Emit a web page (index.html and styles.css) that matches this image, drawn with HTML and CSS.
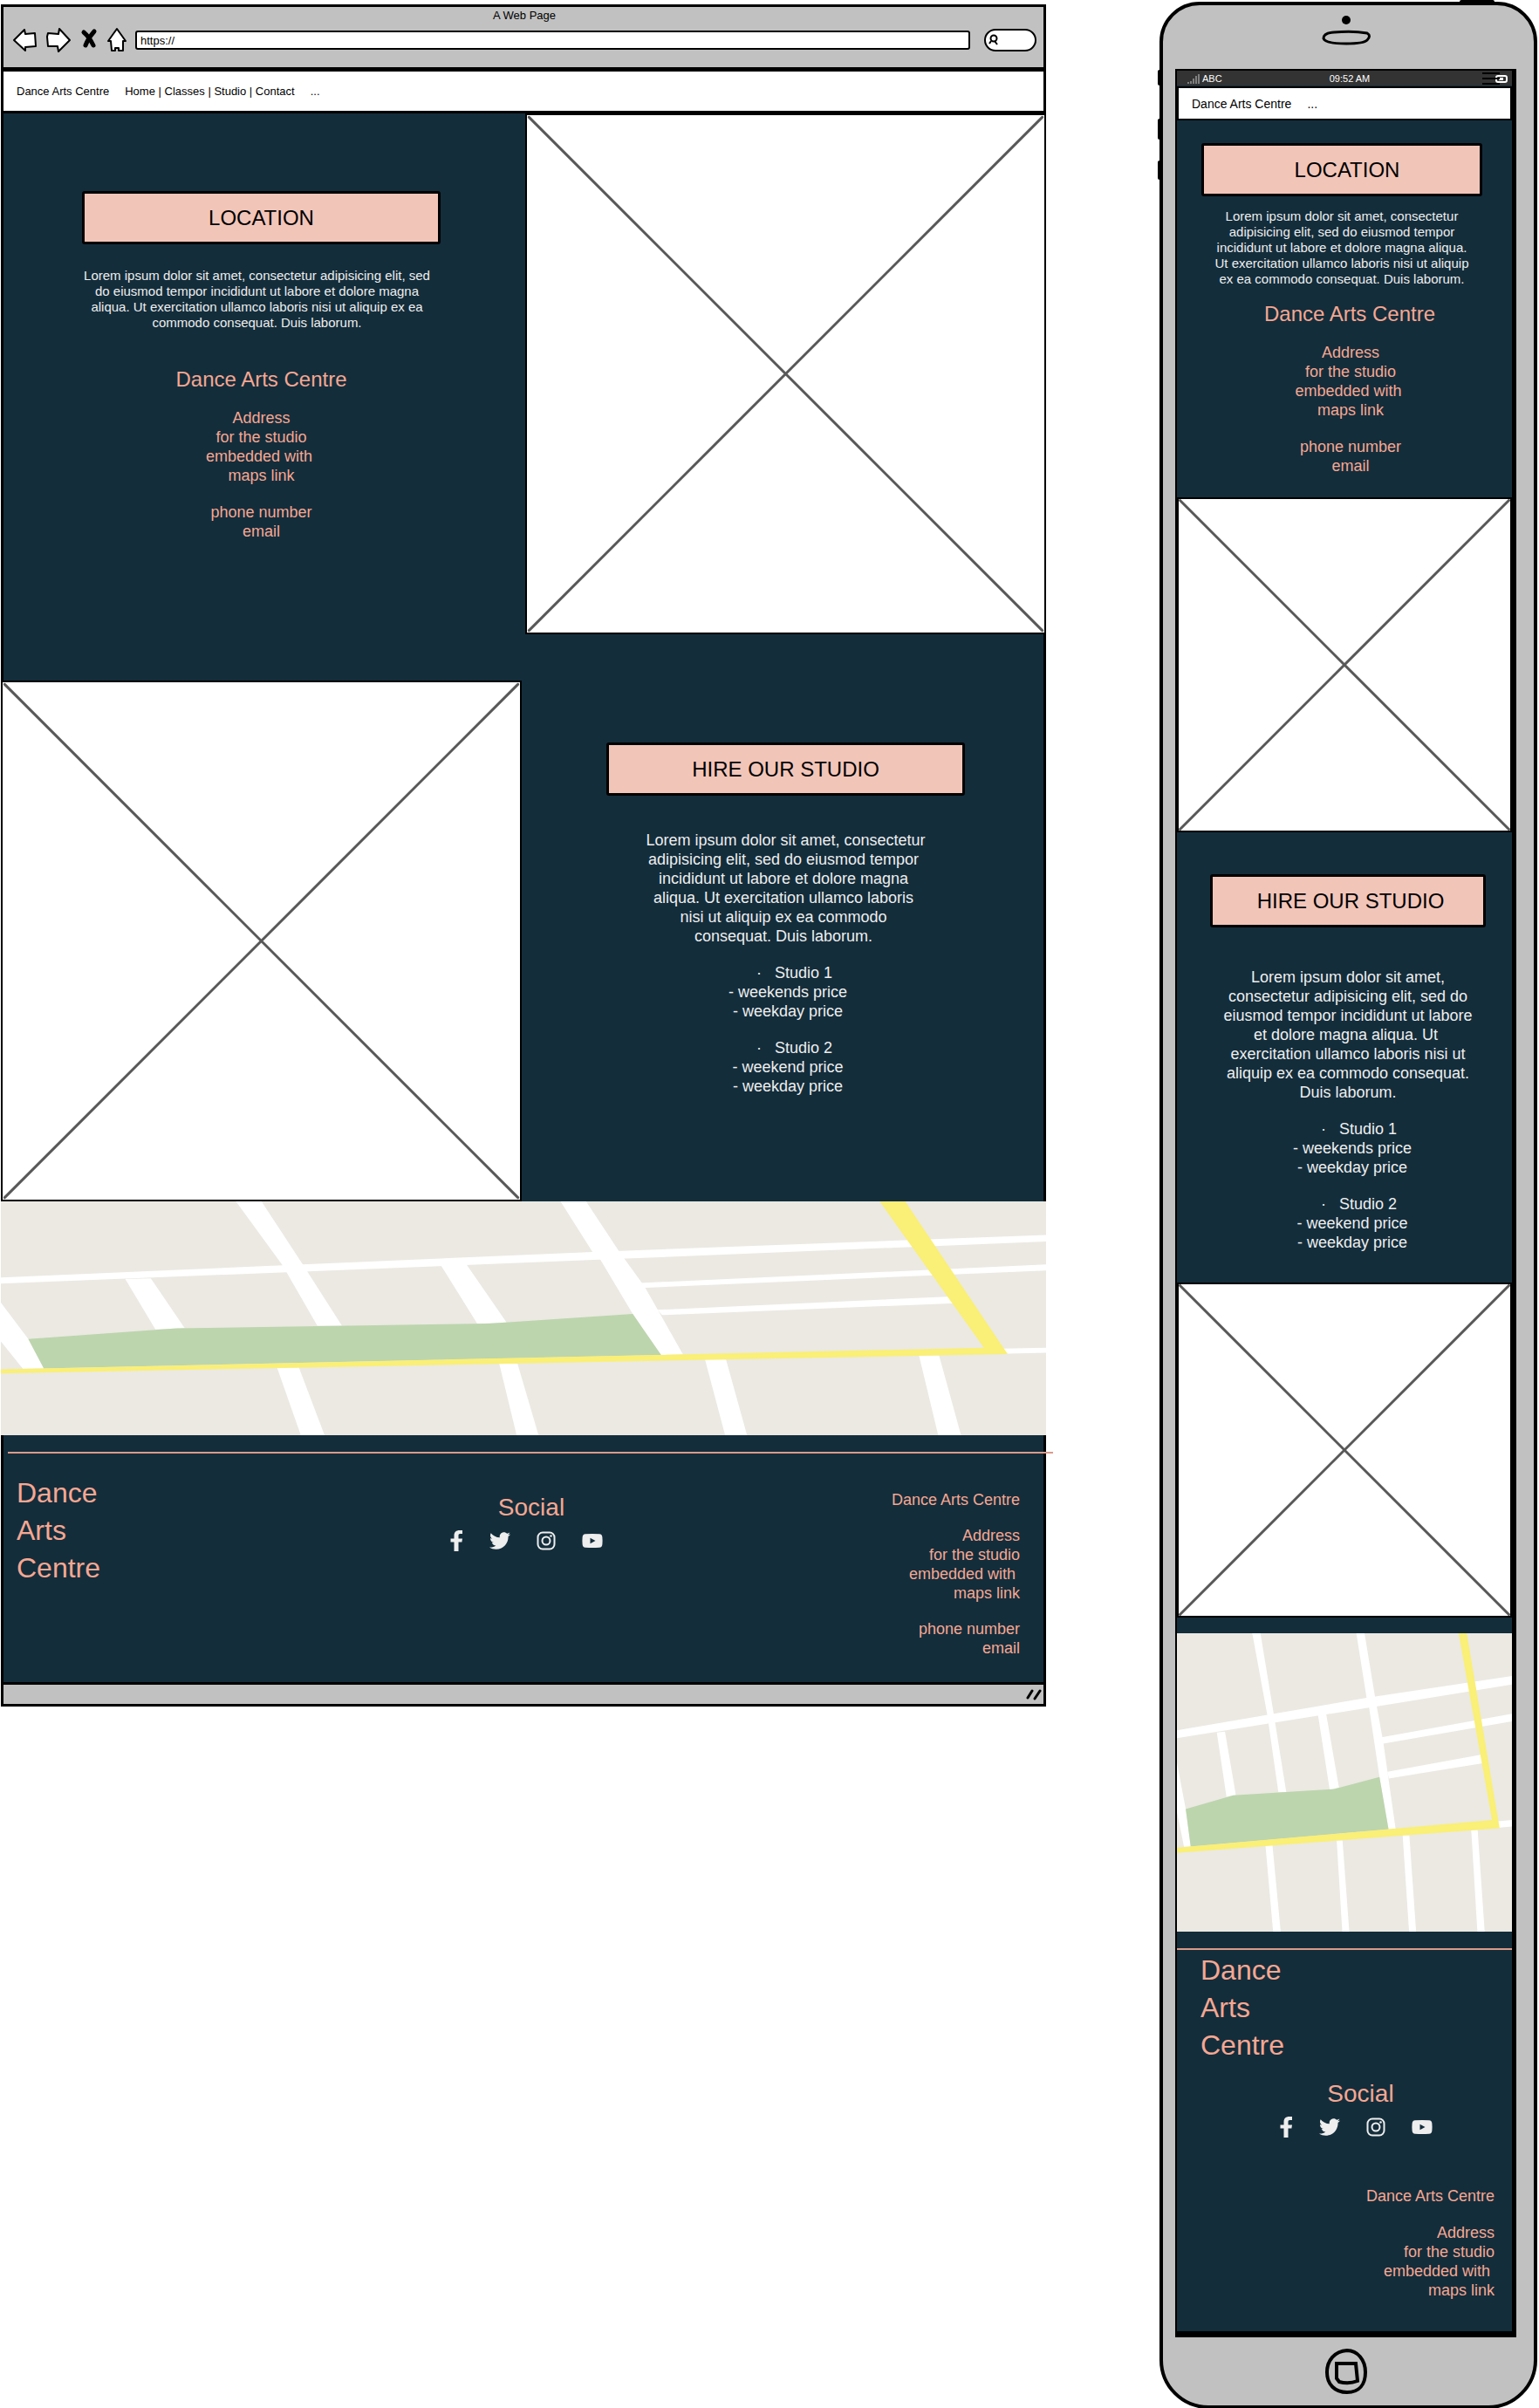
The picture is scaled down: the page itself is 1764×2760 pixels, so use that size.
FILE: index.html
```html
<!DOCTYPE html>
<html lang="en">
<head>
<meta charset="utf-8">
<meta name="viewport" content="width=device-width, initial-scale=1">
<title>Dance Arts Centre – Studio</title>
<link rel="stylesheet" href="styles.css">
</head>
<body>
<svg class="sprite" aria-hidden="true">
  <symbol id="cross" viewBox="0 0 100 100" preserveAspectRatio="none">
    <path d="M.4.4 99.600 99.600M99.600.4.4 99.600" fill="none" stroke="#585858" stroke-width="3" stroke-linecap="round" vector-effect="non-scaling-stroke"/>
  </symbol>
  <symbol id="map" viewBox="96 96 1143 1026" preserveAspectRatio="none">
    <path fill="#ebe9e2" d="M96 96h1143v1026H96z"/>
    <g fill="#fff">
      <path d="M353 96h28l45 276 43 270h-27l-38-266z"/>
      <path d="M708 96h28l36 219 28 155 42 298-24 2-31-180-36-242-8-30z"/>
      <path d="M96 430 743 318l496-75v29L780 347 96 457z"/>
      <path d="M794 454l445-81v26L796 476z"/>
      <path d="M814 572l322-59 22 27-339 55z"/>
      <path d="M232 437l28-3 37 218-32 6z"/>
      <path d="M577 375l28-3 44 255-32 6z"/>
      <path d="M96 540l30 160 17 129-23 1L96 710z"/>
      <path d="M398 825h24l28 297h-26z"/>
      <path d="M641 808h20l23 314h-24z"/>
      <path d="M866 790h23l23 332h-24z"/>
      <path d="M1100 772h22l24 350h-25z"/>
      <path d="M1190 742l49-4v22l-49 5z"/>
    </g>
    <path fill="#bcd5ad" d="M126 700l162-47 342-21 157-42 31 180-675 59z"/>
    <path fill="#faef77" d="M1057 96h28l112 670L96 851v-18l1075-95z"/>
  </symbol>
  <symbol id="facebook" viewBox="3 0 18 24">
    <path d="M9.500 24V13.500H5.500V9.500h4V6C9.500 2 12 0 15.500 0H19v4h-2.500c-1.700 0-2 .8-2 2v3.500H19l-.6 4h-3.900V24z"/>
  </symbol>
  <symbol id="twitter" viewBox="0 0 512 512">
    <path d="M459.370 151.716c.325 4.548.325 9.097.325 13.645 0 138.720-105.583 298.558-298.558 298.558-59.452 0-114.680-17.219-161.137-47.106 8.447.974 16.568 1.299 25.340 1.299 49.055 0 94.213-16.568 130.274-44.832-46.132-.975-84.792-31.188-98.112-72.772 6.498.974 12.995 1.624 19.818 1.624 9.421 0 18.843-1.300 27.614-3.573-48.081-9.747-84.143-51.980-84.143-102.985v-1.299c13.969 7.797 30.214 12.670 47.431 13.319-28.264-18.843-46.781-51.005-46.781-87.391 0-19.492 5.197-37.360 14.294-52.954 51.655 63.675 129.300 105.258 216.365 109.807-1.624-7.797-2.599-15.918-2.599-24.040 0-57.828 46.782-104.934 104.934-104.934 30.213 0 57.502 12.670 76.670 33.137 23.715-4.548 46.456-13.320 66.599-25.340-7.798 24.366-24.366 44.833-46.132 57.827 21.117-2.273 41.584-8.122 60.426-16.243-14.292 20.791-32.161 39.308-52.628 54.253z"/>
  </symbol>
  <symbol id="instagram" viewBox="0 0 24 24">
    <rect x="2.500" y="2.500" width="19" height="19" rx="5.500" fill="none" stroke="currentColor" stroke-width="2"/>
    <circle cx="12" cy="12" r="4.500" fill="none" stroke="currentColor" stroke-width="2"/>
    <circle cx="17.500" cy="6.500" r="1.300"/>
  </symbol>
  <symbol id="youtube" viewBox="0 0 24 24">
    <path fill-rule="evenodd" d="M4 4.300Q12 3.500 20 4.300Q23.200 4.500 23.400 8Q23.800 12 23.400 16Q23.200 19.500 20 19.700Q12 20.500 4 19.700Q.8 19.500.6 16Q.2 12 .6 8Q.8 4.500 4 4.300zM9.500 8.700v6.600l6-3.300z"/>
  </symbol>
</svg>

<main class="board">
  <section class="browser" aria-label="Desktop layout">
    <header class="chrome">
      <p class="chrome-title">A Web Page</p>
      <div class="toolbar">
        <button type="button" class="tool" aria-label="Back"><svg class="tool-icon" viewBox="0 0 30 30"><path d="M2 15 14 3l1 5 11-1 1 15-12 1v4z"/></svg></button>
        <button type="button" class="tool" aria-label="Forward"><svg class="tool-icon" viewBox="0 0 30 30"><path d="M28 15 16 2l-1 6-12-1-1 4 1 11h11l1 6z"/></svg></button>
        <button type="button" class="tool tool-small" aria-label="Stop"><svg class="tool-icon" viewBox="0 0 24 30"><path class="stop" d="M6 6Q12 11 17 21M18 5Q11 13 8 21"/></svg></button>
        <button type="button" class="tool tool-small" aria-label="Home"><svg class="tool-icon" viewBox="0 0 24 30"><path d="M12 2 2 16h3l1 11h4v-3h4v3h5V16h3z"/></svg></button>
        <input class="url" type="text" value="https://" aria-label="Address">
        <label class="search">
          <svg class="search-icon" viewBox="0 0 12 14"><circle cx="6" cy="5" r="3.500"/><path d="M7 8l3 4M3 8 1 11"/></svg>
          <input type="text" aria-label="Search">
        </label>
      </div>
    </header>
    <nav class="site-nav">
      <a href="#">Dance Arts Centre</a>
      <span class="nav-links"><a href="#">Home</a> | <a href="#">Classes</a> | <a href="#">Studio</a> | <a href="#">Contact</a></span>
      <a href="#">...</a>
    </nav>
    <div class="site">
      <div class="panels">
        <section class="copy copy-location">
          <h2 class="label">LOCATION</h2>
          <p class="small-text">Lorem ipsum dolor sit amet, consectetur adipisicing elit, sed<br>do eiusmod tempor incididunt ut labore et dolore magna<br>aliqua. Ut exercitation ullamco laboris nisi ut aliquip ex ea<br>commodo consequat. Duis laborum.</p>
          <h3 class="centre-name">Dance Arts Centre</h3>
          <address class="details"><p>Address<br>for the studio<br>embedded with&nbsp;<br>maps link</p><p>phone number<br>email</p></address>
        </section>
        <figure class="picture"><svg aria-label="Picture"><use href="#cross"/></svg></figure>
        <figure class="picture"><svg aria-label="Picture"><use href="#cross"/></svg></figure>
        <section class="copy copy-hire">
          <h2 class="label">HIRE OUR STUDIO</h2>
          <div class="prices">
            <p>Lorem ipsum dolor sit amet, consectetur<br>adipisicing elit, sed do eiusmod tempor&nbsp;<br>incididunt ut labore et dolore magna&nbsp;<br>aliqua. Ut exercitation ullamco laboris&nbsp;<br>nisi ut aliquip ex ea commodo&nbsp;<br>consequat. Duis laborum.&nbsp;</p>
            <p>&nbsp;&nbsp;&nbsp;&nbsp;·&nbsp;&nbsp; Studio 1<br>&nbsp;- weekends price<br>&nbsp;- weekday price</p>
            <p>&nbsp;&nbsp;&nbsp;&nbsp;·&nbsp;&nbsp; Studio 2<br>&nbsp;- weekend price<br>&nbsp;- weekday price</p>
          </div>
        </section>
      </div>
      <svg class="map" aria-label="Map"><use href="#map"/></svg>
      <hr class="rule">
      <footer class="footer">
        <p class="logo">Dance<br>Arts<br>Centre</p>
        <div class="social">
          <h3>Social</h3>
          <div class="social-links">
            <a href="#" aria-label="Facebook"><svg><use href="#facebook"/></svg></a>
            <a href="#" aria-label="Twitter"><svg><use href="#twitter"/></svg></a>
            <a href="#" aria-label="Instagram"><svg><use href="#instagram"/></svg></a>
            <a href="#" aria-label="YouTube"><svg><use href="#youtube"/></svg></a>
          </div>
        </div>
        <address class="contact"><p>Dance Arts Centre</p><p>Address<br>for the studio<br>embedded with&nbsp;<br>maps link</p><p>phone number<br>email</p></address>
      </footer>
    </div>
    <div class="status"><svg viewBox="0 0 18 14"><path d="M2 11 7 3M10 12l6-9"/></svg></div>
  </section>

  <section class="phone" aria-label="Mobile layout">
    <span class="key key-power"></span>
    <span class="key key-mute"></span>
    <span class="key key-up"></span>
    <span class="key key-down"></span>
    <svg class="speaker" viewBox="0 0 60 40"><circle cx="30" cy="7" r="5"/><path d="M4 28Q4 22 16 21Q38 19 54 22Q59 25 54 30Q50 34 30 34Q6 34 4 28z"/></svg>
    <div class="screen">
      <div class="phone-status">
        <span class="carrier"><svg viewBox="0 0 14 12"><path d="M1 12v-2M4 12V9M7 12V6M10 12V3M13 12V1"/></svg>ABC</span>
        <time>09:52 AM</time>
        <svg class="battery" viewBox="0 0 34 14"><rect x="16" y="4" width="12" height="7" rx="2"/><path d="M19 7.500h5" stroke-width="3"/><path class="bars" d="M0 1h20M0 7h20M0 13h20"/></svg>
      </div>
      <nav class="site-nav">
        <a href="#">Dance Arts Centre</a>
        <a href="#">...</a>
      </nav>
      <section class="copy copy-location">
        <h2 class="label">LOCATION</h2>
        <p class="small-text">Lorem ipsum dolor sit amet, consectetur<br>adipisicing elit, sed do eiusmod tempor<br>incididunt ut labore et dolore magna aliqua.<br>Ut exercitation ullamco laboris nisi ut aliquip<br>ex ea commodo consequat. Duis laborum.</p>
        <h3 class="centre-name">Dance Arts Centre</h3>
        <address class="details"><p>Address<br>for the studio<br>embedded with&nbsp;<br>maps link</p><p>phone number<br>email</p></address>
      </section>
      <figure class="picture"><svg aria-label="Picture"><use href="#cross"/></svg></figure>
      <section class="copy copy-hire">
        <h2 class="label">HIRE OUR STUDIO</h2>
        <div class="prices">
          <p>Lorem ipsum dolor sit amet,<br>consectetur adipisicing elit, sed do<br>eiusmod tempor incididunt ut labore<br>et dolore magna aliqua. Ut&nbsp;<br>exercitation ullamco laboris nisi ut<br>aliquip ex ea commodo consequat.<br>Duis laborum.</p>
          <p>&nbsp;&nbsp;&nbsp;&nbsp;&nbsp;·&nbsp;&nbsp; Studio 1<br>&nbsp;&nbsp;- weekends price<br>&nbsp;&nbsp;- weekday price</p>
          <p>&nbsp;&nbsp;&nbsp;&nbsp;&nbsp;·&nbsp;&nbsp; Studio 2<br>&nbsp;&nbsp;- weekend price<br>&nbsp;&nbsp;- weekday price</p>
        </div>
      </section>
      <figure class="picture"><svg aria-label="Picture"><use href="#cross"/></svg></figure>
      <svg class="map" aria-label="Map"><use href="#map"/></svg>
      <hr class="rule">
      <footer class="footer">
        <p class="logo">Dance<br>Arts<br>Centre</p>
        <div class="social">
          <h3>Social</h3>
          <div class="social-links">
            <a href="#" aria-label="Facebook"><svg><use href="#facebook"/></svg></a>
            <a href="#" aria-label="Twitter"><svg><use href="#twitter"/></svg></a>
            <a href="#" aria-label="Instagram"><svg><use href="#instagram"/></svg></a>
            <a href="#" aria-label="YouTube"><svg><use href="#youtube"/></svg></a>
          </div>
        </div>
        <address class="contact"><p>Dance Arts Centre</p><p>Address<br>for the studio<br>embedded with&nbsp;<br>maps link</p></address>
      </footer>
    </div>
    <button type="button" class="home" aria-label="Home"><svg viewBox="0 0 50 54"><path d="M26 3C38 3 47 14 47 28S40 51 26 51 3 42 3 28 12 4 26 3z"/><path d="M14 18h22l2 20q-10 4-21 1l-3-4z"/></svg></button>
  </section>
</main>
</body>
</html>
```
FILE: styles.css
```css
:root {
  --navy: #132d3b;
  --blush: #f2c5b9;
  --coral: #f6a792;
  --paper: #eee;
  --metal: #c1c1c1;
}

* { box-sizing: border-box; }

body {
  margin: 0;
  background: #fff;
  color: #000;
  font-family: "Liberation Sans", Arial, sans-serif;
  font-size: 18px;
  line-height: 22px;
}

h2, h3, p, figure { margin: 0; font-weight: 400; }
a { color: inherit; text-decoration: none; }
svg { display: block; }
address { font-style: normal; }
button { padding: 0; border: 0; background: none; }
.sprite { position: absolute; width: 0; height: 0; }

.board {
  display: grid;
  grid-template-columns: 1198fr 433fr;
  column-gap: 130px;
  align-items: start;
  padding: 2px 2px 2px 1px;
}

/* Desktop browser frame */
.browser { padding-top: 3px; min-width: 0; }

.chrome {
  height: 75px;
  padding: 2px 8px 0 10px;
  border: 3px solid #000;
  background: var(--metal);
}
.chrome-title { font-size: 13px; line-height: 16px; text-align: center; }
.toolbar { display: flex; align-items: center; gap: 8px; margin-top: 3px; }
.tool { width: 30px; height: 34px; }
.tool-small { width: 24px; }
.tool-icon {
  width: 100%;
  height: 30px;
  fill: #fff;
  stroke: #000;
  stroke-width: 2;
  stroke-linejoin: round;
}
.tool-icon .stop { fill: none; stroke-width: 5; stroke-linecap: round; }
.url {
  flex: 1;
  min-width: 0;
  height: 22px;
  margin: 0 8px 0 1px;
  padding: 0 4px;
  border: 2px solid #000;
  border-radius: 3px;
  background: #fff;
  font: 13px "Liberation Sans", Arial, sans-serif;
}
.search {
  display: flex;
  align-items: center;
  width: 60px;
  height: 26px;
  padding-left: 3px;
  border: 2px solid #000;
  border-radius: 14px;
  background: #fff;
}
.search-icon { width: 12px; height: 14px; fill: none; stroke: #000; stroke-width: 2; }
.search input { width: 36px; padding: 0; border: 0; background: none; }

.site-nav {
  display: flex;
  align-items: center;
  gap: 18px;
  height: 50px;
  padding: 0 15px;
  border: 3px solid #000;
  border-top-width: 2px;
  background: #fff;
  font-size: 13px;
  line-height: 16px;
}

.site {
  background: var(--navy);
  box-shadow: inset 3px 0 #000, inset -3px 0 #000;
}
.panels { display: grid; grid-template-columns: 1fr 1fr; column-gap: 4px; row-gap: 53px; }
.picture { aspect-ratio: 1; border: 2px solid #000; background: #fff; }
.picture svg { width: 100%; height: 100%; }

.copy { display: flex; flex-direction: column; align-items: center; text-align: center; white-space: nowrap; }
.copy-location { padding-top: 89px; }
.copy-hire { padding-top: 71px; color: var(--paper); }
.label {
  width: 69%;
  padding: 13px 0;
  border: 3px solid #000;
  border-radius: 3px;
  background: var(--blush);
  color: #000;
  font-size: 24px;
  line-height: 29px;
}
.small-text { margin: 27px 10px 0 0; color: var(--paper); font-size: 15px; line-height: 18px; }
.centre-name { margin-top: 41px; color: var(--coral); font-size: 24px; line-height: 30px; }
.details { display: grid; gap: 20px; margin-top: 18px; color: var(--coral); }
.prices { display: grid; gap: 20px; margin-top: 40px; }

.map { width: 100%; aspect-ratio: 1198 / 268; height: auto; }
.rule { height: 2px; margin: 19px -8px 0 8px; border: 0; background: #dc9a89; }

.footer {
  display: grid;
  grid-template-columns: 1fr 1fr 1fr;
  padding: 24px 30px 28px 18px;
  color: var(--coral);
}
.logo { font-size: 32px; line-height: 43px; }
.social { padding: 21px 0 0 30px; }
.social h3 { font-size: 28px; line-height: 34px; text-align: center; }
.social-links { display: flex; justify-content: center; gap: 29px; margin-top: 9px; padding-right: 12px; color: var(--paper); }
.social-links svg { width: 24px; height: 24px; fill: currentColor; }
.social-links a:first-child svg { width: 18px; }
.contact { display: grid; gap: 19px; align-content: start; padding-top: 18px; text-align: right; }

.status {
  display: flex;
  justify-content: flex-end;
  align-items: center;
  height: 28px;
  padding-right: 2px;
  border: 3px solid #000;
  background: var(--metal);
}
.status svg { width: 18px; height: 14px; fill: none; stroke: #000; stroke-width: 3; stroke-linecap: round; }

/* Phone frame */
.phone {
  position: relative;
  min-width: 0;
  padding: 10px 20px 12px 14px;
  border: 4px solid #000;
  border-radius: 46px 46px 56px 56px;
  background: var(--metal);
}
.key { position: absolute; left: -6px; width: 4px; background: #000; border-radius: 2px; }
.key-power { top: -6px; left: 340px; width: 40px; height: 4px; }
.key-mute { top: 74px; height: 18px; }
.key-up { top: 130px; height: 24px; }
.key-down { top: 178px; height: 22px; }
.speaker { width: 60px; height: 40px; margin: 0 auto; fill: none; stroke: #000; stroke-width: 3; }
.speaker circle { fill: #000; stroke: none; }
.screen {
  margin-top: 23px;
  border: solid #000;
  border-width: 2px 5px 7px 2px;
  background: var(--navy);
}
.phone-status {
  display: grid;
  grid-template-columns: 1fr auto 1fr;
  align-items: center;
  height: 17px;
  margin-bottom: 1px;
  padding: 0 0 0 12px;
  background: #333;
  color: #fff;
  font-size: 11px;
  line-height: 12px;
}
.carrier { display: flex; align-items: center; gap: 3px; }
.carrier svg { width: 14px; height: 12px; stroke: #ccc; stroke-width: 1; }
.battery { justify-self: end; width: 34px; height: 14px; fill: none; stroke: #fff; stroke-width: 2; }
.battery .bars { stroke: #000; }

.phone .site-nav { height: 39px; border-width: 2px; font-size: 14px; }
.phone .copy-location { padding: 26px 6px 25px 0; }
.phone .copy-location .label { width: 85%; padding-left: 12px; }
.phone .copy-hire { padding: 48px 0 35px 8px; }
.phone .copy-hire .label { width: 84%; padding-left: 6px; }
.phone .small-text { margin: 14px 0 0; }
.phone .centre-name { margin-top: 16px; padding-left: 18px; }
.phone .details { padding-left: 20px; }
.phone .prices { gap: 20px; margin-top: 46px; }
.phone .map { margin-top: 18px; aspect-ratio: 385 / 343; }
.phone .rule { margin: 19px 0 0; }
.phone .footer { display: block; padding: 2px 20px 36px 27px; }
.phone .social { padding: 17px 0 0 30px; }
.phone .contact { gap: 20px; padding-top: 56px; }
.home { display: block; width: 50px; height: 54px; margin: 12px auto 0; }
.home svg { width: 50px; height: 54px; fill: none; stroke: #000; stroke-width: 4; }
```
